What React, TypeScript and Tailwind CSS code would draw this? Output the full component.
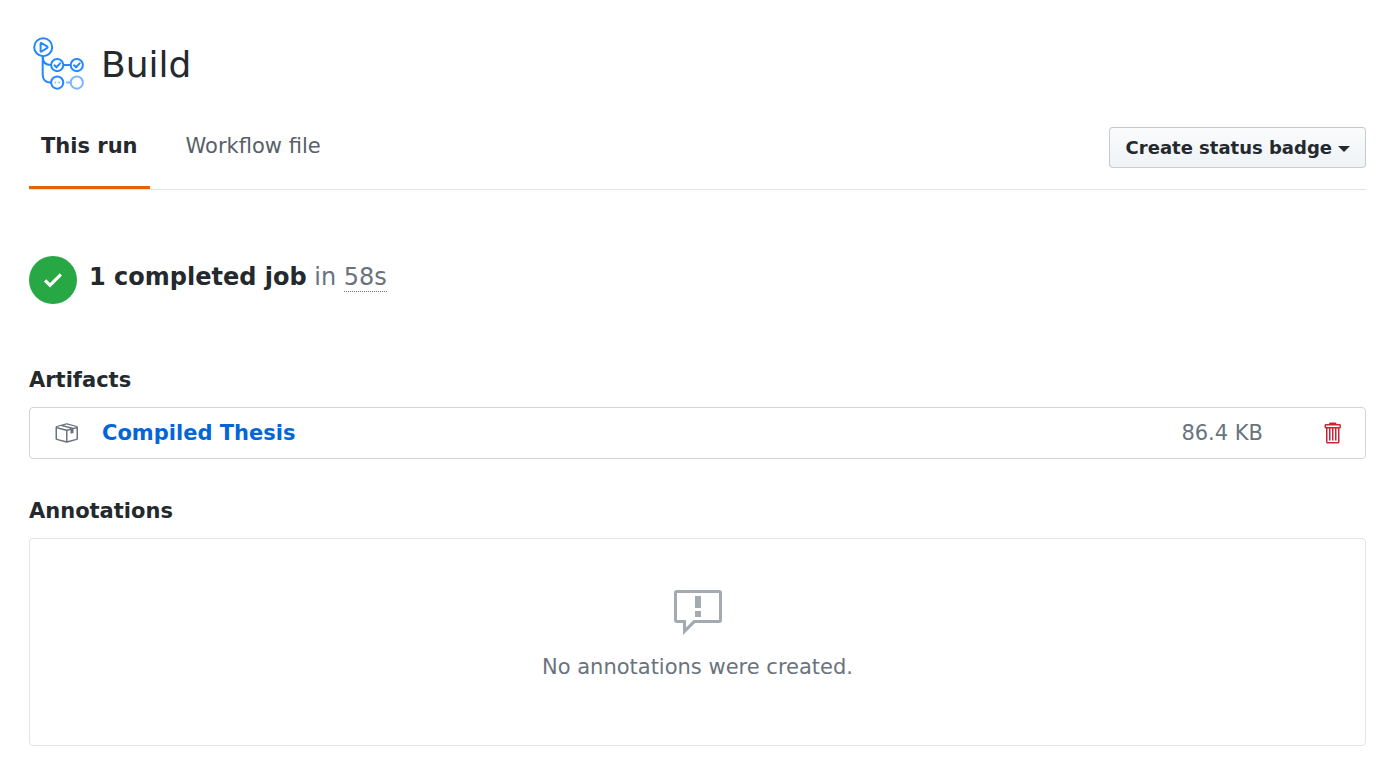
import type { ReactNode } from "react";

function WorkflowLogo() {
  return (
    <svg className="size-15 shrink-0" viewBox="0 0 60 60" fill="none" stroke="#2188ff" strokeWidth="2" aria-hidden="true">
      <circle cx="13.2" cy="13.2" r="9" />
      <path d="M10.6 9.6v7.4c0 .5.5.8.9.5l5.8-3.7c.4-.3.4-.8 0-1.1l-5.8-3.7c-.4-.2-.9.1-.9.6z" strokeWidth="2" strokeLinejoin="round" />
      <path d="M12.7 22.2v18.2c0 5 3 8.1 8.3 8.1M12.7 22.2c0 5.6 3.2 8.8 8.3 8.8M33.3 31h7" />
      <circle cx="27.2" cy="31.1" r="6.1" />
      <circle cx="46.8" cy="31.1" r="6.1" />
      <circle cx="27.2" cy="48.6" r="6.1" />
      <path d="M24.5 31.2l2 2 3.6-3.8M44.1 31.2l2 2 3.6-3.8" strokeLinecap="round" />
      <g stroke="#79b8ff">
        <circle cx="46.8" cy="48.6" r="6.1" />
        <path d="M36.2 48.5h4.4" />
        <path d="M24.5 48.5h1.7M28.3 48.5h1.7" strokeWidth="1.7" />
      </g>
    </svg>
  );
}

function Icon({ className, viewBox, d }: { className: string; viewBox: string; d: string }) {
  return (
    <svg className={className} viewBox={viewBox} fill="currentColor" aria-hidden="true">
      <path fillRule="evenodd" d={d} />
    </svg>
  );
}

const CHECK = "M12 5l-8 8-4-4 1.5-1.5L4 10l6.5-6.5L12 5z";
const PACKAGE =
  "M1 4.27v7.47c0 .45.3.84.75.97l6.5 1.73c.16.05.34.05.5 0l6.5-1.73c.45-.13.75-.52.75-.97V4.27c0-.45-.3-.84-.75-.97l-6.5-1.74a1.4 1.4 0 00-.5 0L1.75 3.3c-.45.13-.75.52-.75.97zm7 9.09l-6-1.59V5l6 1.61v6.75zM2 4l2.5-.67L11 5.06l-2.5.67L2 4zm13 7.77l-6 1.59V6.61l2-.55V8.5l2-.53V5.53L15 5v6.77zm-2-7.24L6.5 2.8l2-.53L15 4l-2 .53z";
const TRASH =
  "M11 2H9c0-.55-.45-1-1-1H5c-.55 0-1 .45-1 1H2c-.55 0-1 .45-1 1v1c0 .55.45 1 1 1v9c0 .55.45 1 1 1h7c.55 0 1-.45 1-1V5c.55 0 1-.45 1-1V3c0-.55-.45-1-1-1zm-1 12H3V5h1v8h1V5h1v8h1V5h1v8h1V5h1v9zm1-10H2V3h9v1z";
const REPORT =
  "M0 2a1 1 0 011-1h14a1 1 0 011 1v9a1 1 0 01-1 1H7l-4 4v-4H1a1 1 0 01-1-1V2zm1 0h14v9H6.5L4 13.5V11H1V2zm6 6h2v2H7V8zm0-5h2v4H7V3z";

function SectionTitle({ children }: { children: ReactNode }) {
  return <h2 className="mb-[11px] text-[21px] leading-8 font-bold">{children}</h2>;
}

export default function App() {
  return (
    <main className="bg-white pt-[34px] pr-6 pb-3 pl-[29px] font-['DejaVu_Sans',sans-serif] text-[21px] leading-8 text-[#24292e]">
      <header className="flex items-center gap-[11px] pl-px">
        <WorkflowLogo />
        <h1 className="pt-0.5 text-4xl leading-[54px]">Build</h1>
      </header>

      <div className="mt-[33px] flex items-start justify-between border-b border-[#e1e4e8]">
        <nav className="flex" aria-label="Run views">
          <a href="#run" aria-current="page" className="border-b-3 border-[#e36209] px-3 pt-[3px] pb-6 font-bold">
            This run
          </a>
          <a href="#file" className="ml-6 px-3 pt-[3px] pb-6 text-[#586069]">
            Workflow file
          </a>
        </nav>
        <button
          type="button"
          className="flex items-center gap-[6px] rounded-[4px] border border-[#1b1f23]/20 bg-linear-to-b from-[#fafbfc] to-[#eff3f6] py-[6px] pr-[15px] pl-4 text-lg leading-[27px] font-bold"
        >
          Create status badge
          <span className="mt-[3px] border-x-6 border-t-6 border-x-transparent border-t-[#24292e]" />
        </button>
      </div>

      <section className="mt-[66px] flex items-start gap-3">
        <span className="grid size-12 shrink-0 place-items-center rounded-full bg-[#28a745] text-white">
          <Icon className="h-6 w-[18px]" viewBox="0 0 12 16" d={CHECK} />
        </span>
        <p className="pt-[3px] text-2xl leading-9 text-[#6a737d]">
          <strong className="font-bold text-[#24292e]">1 completed job</strong> in{" "}
          <span className="border-b border-dotted border-[#6a737d]">58s</span>
        </p>
      </section>

      <section className="mt-[60px]">
        <SectionTitle>Artifacts</SectionTitle>
        <div className="flex items-center rounded-[4px] border border-[#d1d5da] px-6 py-[9px]">
          <Icon className="mr-6 size-6 shrink-0 text-[#6a737d]" viewBox="0 0 16 16" d={PACKAGE} />
          <a href="#artifact" className="font-bold text-[#0366d6]">
            Compiled Thesis
          </a>
          <span className="mr-[60px] ml-auto text-[#6a737d]">86.4 KB</span>
          <button type="button" aria-label="Delete artifact" className="text-[#cb2431]">
            <Icon className="block h-6 w-[18px]" viewBox="0 0 12 16" d={TRASH} />
          </button>
        </div>
      </section>

      <section className="mt-9">
        <SectionTitle>Annotations</SectionTitle>
        <div className="flex flex-col items-center rounded-[4px] border border-[#e1e4e8] pt-12 pb-[62px]">
          <Icon className="size-12 text-[#a3aab1]" viewBox="0 0 16 16" d={REPORT} />
          <p className="mt-4 text-[#6a737d]">No annotations were created.</p>
        </div>
      </section>
    </main>
  );
}
